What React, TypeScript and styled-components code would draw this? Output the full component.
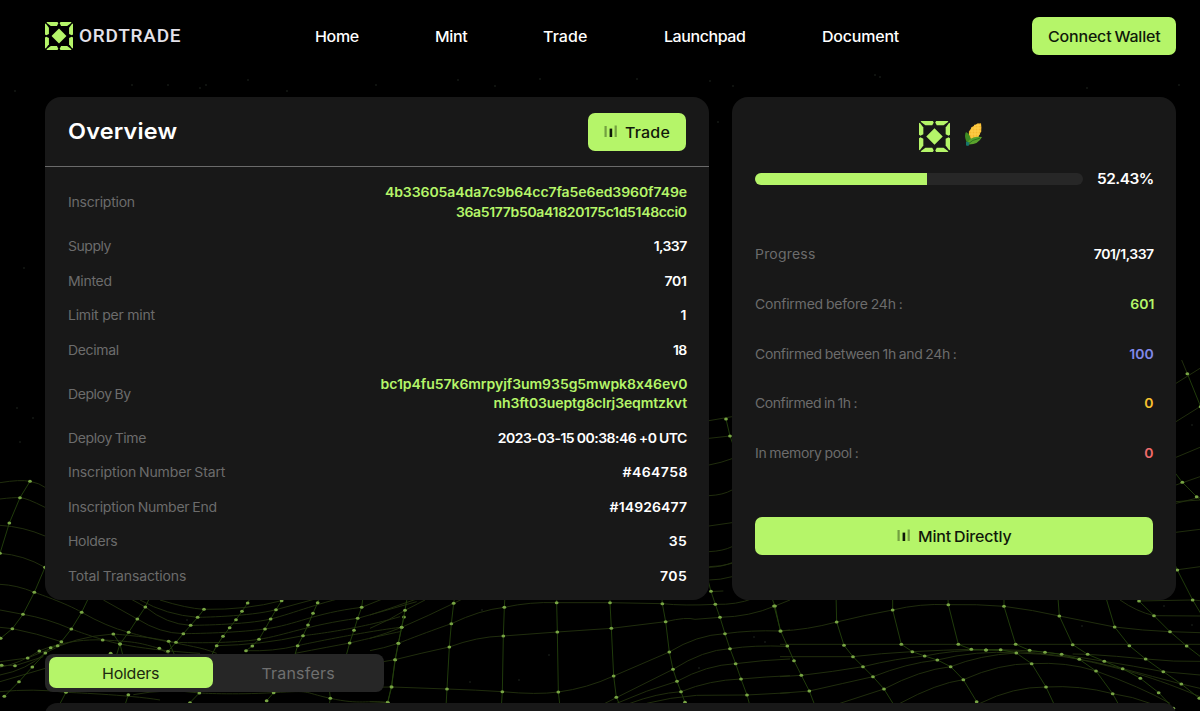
import React from "react";
import styled, { createGlobalStyle } from "styled-components";

const LIME = "#b5f569";
const WIDEN = 1.075;

const GlobalStyle = createGlobalStyle`
  *, *::before, *::after { box-sizing: border-box; }
  html, body { margin: 0; background: #000; }
  body {
    font-family: Inter, "Liberation Sans", sans-serif;
    height: 711px;
    overflow: hidden;
  }
`;

const Page = styled.div`
  position: relative;
  width: 1200px;
  height: 711px;
  overflow: hidden;
  background: #000;
`;

const Backdrop = styled.svg`
  position: absolute;
  inset: 0;
`;

const Content = styled.div`
  position: relative;
  display: flex;
  flex-direction: column;
  padding: 0 24px 0 45px;
`;

const Header = styled.header`
  display: flex;
  align-items: center;
  height: 55px;
  padding-top: 17px;
`;

const Brand = styled.div`
  display: flex;
  align-items: center;
  gap: 6px;
  width: 270px;
`;

const BrandName = styled.span`
  font: 500 19px/24px Roboto, sans-serif;
  letter-spacing: 0.75px;
  color: #e4e2ea;
`;

const Nav = styled.nav`
  display: grid;
  grid-template-columns: 120px 108px 121px 157.5px auto;
  flex: 1;
`;

/* Inter drawn a little shorter and wider, for an extended-grotesque look. */
const Text = styled.span<{ $track?: number; $word?: number; $origin?: string; $shift?: number }>`
  display: inline-block;
  font-size: ${1 / WIDEN}em;
  letter-spacing: ${(p) => (p.$track ?? 0) / WIDEN}px;
  word-spacing: ${(p) => (p.$word ?? 0) / WIDEN}px;
  margin-right: ${(p) => -(p.$track ?? 0) / WIDEN}px;
  white-space: nowrap;
  transform: translateY(${(p) => p.$shift ?? 0.5}px) scaleX(${WIDEN});
  transform-origin: ${(p) => p.$origin ?? "left"} center;
`;

const NavLink = styled.a`
  display: flex;
  font-size: 16px;
  line-height: 20px;
  font-weight: 500;
  color: #fff;
`;

const Button = styled.button<{ $width: string; $end?: number }>`
  display: flex;
  align-items: center;
  justify-content: center;
  gap: 7px;
  width: ${(p) => p.$width};
  height: 38px;
  padding: 0 ${(p) => p.$end ?? 0}px 0 0;
  border: 0;
  border-radius: 7px;
  background: ${LIME};
  color: #10180a;
  font: 500 16px/20px Inter, sans-serif;
`;

const Panels = styled.main`
  display: grid;
  grid-template-columns: 664px 444px;
  gap: 23px;
  height: 503px;
  margin-top: 42px;
`;

const Card = styled.section`
  border-radius: 16px;
  background: #181818;
`;

const CardHeader = styled.div`
  display: flex;
  align-items: center;
  justify-content: space-between;
  height: 70px;
  padding: 0 23px;
  border-bottom: 1px solid #6a6a6a;
`;

const Title = styled.h1`
  margin: 0;
  font-size: 23.4px;
  line-height: 28px;
  font-weight: 600;
  color: #fff;
`;

const Details = styled.div`
  display: flex;
  flex-direction: column;
  gap: 15.3px;
  padding: 15.3px 22px 0 23px;
`;

const DetailRow = styled.div`
  display: flex;
  align-items: center;
  justify-content: space-between;
  font-size: 14px;
  line-height: 19.2px;
`;

const Label = styled.div`
  display: flex;
  color: #6c6c6c;
`;

const Value = styled.div<{ $color?: string }>`
  display: flex;
  flex-direction: column;
  align-items: flex-end;
  font-weight: 600;
  color: ${(p) => p.$color ?? "#fff"};
`;

const MintCard = styled(Card)`
  display: flex;
  flex-direction: column;
  padding: 24px 22px 0 23px;
`;

const TokenIcons = styled.div`
  display: flex;
  justify-content: center;
  gap: 14px;
  height: 32px;
  padding-right: 6px;
`;

const ProgressLine = styled.div`
  display: flex;
  align-items: center;
  justify-content: space-between;
  height: 20px;
  margin-top: 16px;
  color: #fff;
  font-size: 15.4px;
  font-weight: 600;
`;

const Track = styled.div`
  width: 328px;
  height: 12px;
  border-radius: 6px;
  overflow: hidden;
  background: #272727;
`;

const Fill = styled.div`
  width: 52.43%;
  height: 100%;
  background: ${LIME};
`;

const Stats = styled.div`
  display: flex;
  flex-direction: column;
  gap: 30.6px;
  margin: 55px 0 54.4px;
`;

const Tabs = styled.div`
  display: flex;
  width: 339px;
  height: 38px;
  margin-top: 54px;
  padding: 3px 4px 4px;
  border-radius: 8px;
  background: #262626;
`;

const Tab = styled.div<{ $active?: boolean }>`
  display: flex;
  align-items: center;
  justify-content: center;
  flex: 0 0 ${(p) => (p.$active ? 164 : 171)}px;
  height: 31px;
  border-radius: 7px;
  font-size: 16px;
  background: ${(p) => (p.$active ? LIME : "transparent")};
  color: ${(p) => (p.$active ? "#1d2b10" : "#6f6f6f")};
`;

const TableCard = styled.section`
  height: 20px;
  margin-top: 11px;
  border-radius: 12px 12px 0 0;
  background: #181818;
`;

const LogoMark = ({ size }: { size: number }) => (
  <svg width={size} height={size} viewBox="0 0 30 30" fill={LIME}>
    {[0, 90, 180, 270].map((a) => (
      <g key={a} transform={`rotate(${a} 15 15)`}>
        <path d="M2.2 0H13.4L14.3 1.4 12.8 4.2H6.2L1.6 .8Z" />
        <path d="M0 2.2V13.4L1.4 14.3 4.2 12.8V6.2L.8 1.6Z" />
      </g>
    ))}
    <path d="M15 7 23 15 15 23 7 15Z" />
  </svg>
);

const Bars = () => (
  <svg width="14" height="13" viewBox="0 0 14 13">
    <rect x="0.5" y="1" width="2.2" height="11" fill="#73a040" />
    <rect x="5.6" y="3.6" width="2.6" height="8.4" fill="#10180a" />
    <rect x="10.6" y="0.5" width="2.2" height="11.5" fill="#73a040" />
  </svg>
);

const Corn = () => (
  <svg width="20" height="26" viewBox="0 -1.5 20 26">
    <path d="M13 1.2 17 .8 17.4 5 17.2 9 14.5 14 9 18 4.5 15 5 9 8 4.5Z" fill="#f6b92e" />
    <path d="M14 1v14M11 3v14M8 6v11M6 8.5H17M7 5.5H17M5 11.5H16M10 2.8H17" stroke="#ffcf4a" strokeWidth="1" fill="none" />
    <path d="M2 9.5Q0 13 2 18L4 22.5 7 20Q7 12 2 9.5Z" fill="#3d8b22" />
    <path d="M3 22Q5 13 18 14.5 14 22.5 4 22Z" fill="#5aa32c" />
    <path d="M3.5 22Q8 17 16 15.6" stroke="#2f7820" fill="none" />
    <path d="M2 19 5.5 20 4.5 23.6 2 23Z" fill="#16756a" />
  </svg>
);

type Patch = { x: number; y: number; columns: number[][]; dots?: number[]; rows: string };

/* Mesh patches: columns are x,y pairs of nodes, three units to a pixel. */
const PATCHES: Patch[] = [
  {
    x: 0,
    y: 380,
    columns: [
      [90, 304, 60, 353, 28, 429, 0, 520],
      [135, 562, 103, 637, 69, 703, 37, 746, 2, 775],
      [270, 645, 245, 697, 214, 747, 184, 785, 173, 797, 152, 803, 136, 819, 97, 861, 57, 905, 13, 949],
      [455, 640, 436, 681, 412, 717, 386, 757, 360, 792, 345, 840],
      [612, 688, 593, 712, 572, 736, 550, 761, 528, 787, 504, 814],
      [755, 645, 743, 669, 726, 694, 708, 719, 689, 743, 669, 769, 650, 797, 630, 835],
      [845, 662, 828, 689, 812, 717, 795, 747, 777, 778, 757, 798, 738, 812],
      [960, 645, 953, 668, 939, 700, 924, 735, 909, 767, 893, 797, 880, 840],
      [1090, 645, 1085, 682, 1073, 715, 1062, 751, 1049, 789, 1035, 840],
      [1212, 711, 1205, 742, 1195, 790, 1186, 839, 1174, 920, 1163, 967],
      [340, 762, 360, 792, 372, 840],
      [506, 784, 530, 840],
      [198, 937, 170, 990],
      [385, 944, 370, 990],
      [598, 939, 570, 968],
      [821, 938, 800, 962],
      [985, 900, 991, 955, 985, 990],
    ],
    dots: [83, 834, 118, 813, 45, 857, 5, 856, 308, 780, 478, 805, 332, 820],
    rows: `M0 308Q60 298 90 304T135 322M0 357Q40 352 60 353T135 382M0 436Q70 440 135 468M0 520Q70 525 135 562
      M480 660Q560 685 612 688Q740 690 845 662M420 660Q500 705 593 712S750 710 828 689L953 655
      M380 650 436 681Q500 733 572 736S740 735 812 717 953 668 1085 640
      M310 660 412 717Q480 760 550 761S700 760 795 747 939 700 1085 682L1165 650
      M245 697Q320 740 386 757S480 785 528 787 700 790 777 778 924 735 1073 715L1250 665
      M0 613Q50 615 103 637S200 670 245 697M0 690 69 703Q140 715 214 747S300 780 360 792 504 814 600 820
      M0 742 37 746Q110 760 184 785M0 862Q60 850 118 813S200 775 308 780 420 790 478 805L520 830
      M0 885Q80 870 136 819 220 770 340 762S450 770 506 784 600 800 650 820
      M0 856 45 857 130 830M0 845 83 834 190 790M0 905 136 865M650 797Q780 795 909 767S1062 751 1200 710
      M738 812Q820 815 893 797S1062 760 1200 742M885 820Q990 800 1049 789S1150 765 1200 755
      M0 935Q100 925 198 937S385 944 480 960M400 944Q500 925 598 939S700 945 821 938 900 935 991 955 1100 960 1163 967`,
  },
  {
    x: 370,
    y: 560,
    columns: [
      [113, 105, 105, 151, 95, 202, 85, 250, 75, 299, 65, 381, 53, 428],
      [255, 105, 251, 130, 244, 191, 238, 261, 231, 387, 228, 440],
      [405, 105, 403, 142, 400, 228, 397, 395, 394, 440],
      [560, 105, 560, 128, 562, 216, 565, 396, 570, 440],
      [720, 105, 720, 128, 724, 205, 731, 348, 739, 412, 752, 440],
      [875, 105, 877, 131, 887, 185, 898, 276, 909, 328, 921, 364, 933, 395, 945, 427],
      [1010, 45, 1023, 94, 1036, 133, 1050, 172, 1065, 221, 1080, 266, 1097, 311, 1113, 357, 1131, 405, 1142, 445],
      [1200, 100, 1215, 138, 1231, 213],
    ],
    rows: `M0 165 60 145 160 110M0 205Q60 180 105 151L165 120M0 235Q50 220 95 202 180 165 251 130L275 118
      M0 272Q40 265 85 250S160 220 244 191Q330 150 403 142 480 125 560 128H720L877 131Q940 138 1036 133 1100 135 1150 115
      M40 305 75 299Q150 280 238 261 320 230 400 228L562 216 724 205 887 185Q950 170 975 178L1050 172Q1140 170 1215 138L1260 120
      M0 382 65 381 231 387Q320 390 397 395 500 405 565 396 650 385 731 348L898 276Q980 225 1065 221 1140 210 1231 213L1260 210
      M705 430 909 328Q1000 270 1080 266 1150 255 1251 259M740 430Q830 390 921 364 1010 315 1097 311 1180 300 1260 297
      M780 430Q860 400 933 395 1020 360 1113 357 1190 350 1260 347M830 430Q900 412 980 406L1131 405 1260 398M0 425 53 428
      M1018 95 1060 93M1018 60Q1050 60 1086 50M1018 20Q1050 20 1086 10`,
  },
  {
    x: 780,
    y: 500,
    columns: [
      [-18, 318, 2, 393, 22, 438, 42, 482, 64, 526, 88, 573, 108, 625],
      [168, 280, 170, 366, 192, 436, 219, 470, 249, 500, 279, 530, 312, 567, 348, 625],
      [338, 280, 338, 330, 364, 433, 397, 455, 434, 468, 472, 480, 512, 500, 550, 539, 590, 605],
      [503, 280, 505, 314, 535, 433, 574, 448, 618, 450],
      [672, 280, 672, 319, 707, 433, 749, 451, 795, 457, 845, 463, 898, 478, 948, 513, 998, 581, 1022, 625],
      [618, 450, 662, 449, 709, 459, 755, 491, 798, 561, 828, 625],
      [833, 280, 838, 348, 878, 434, 923, 463, 973, 484, 1028, 506, 1081, 535, 1136, 578, 1180, 625],
      [974, 280, 1004, 381, 1048, 437, 1097, 477, 1150, 515, 1204, 552, 1258, 595],
      [1077, 303, 1122, 347, 1170, 395, 1220, 438, 1268, 475],
      [1175, 170, 1192, 210, 1238, 300, 1268, 350],
    ],
    rows: `M0 393Q80 390 170 366 255 345 338 330 420 310 505 314 590 312 672 319 760 330 838 348L1004 381Q1090 392 1170 395L1260 398
      M0 433H1260M0 470H219Q300 460 397 455T574 448L662 449Q780 452 845 463T973 484
      M0 530 64 526Q160 515 249 500 350 475 434 468 520 450 618 450S800 455 898 478 1081 515 1260 590
      M0 580 88 573Q190 550 279 530 380 490 472 480 590 450 709 459 850 460 1028 506
      M180 610 312 567Q420 510 512 500 600 465 709 459M360 610Q470 550 550 539 660 490 755 491 860 485 948 513 1080 560 1170 610
      M600 610Q700 560 798 561 900 555 998 581 1060 590 1110 610M878 462 923 463Q1010 468 1097 477T1260 484
      M973 484Q1060 498 1150 515L1260 525M1028 506Q1120 530 1204 552L1260 565M1020 300Q1070 335 1122 347L1260 348
      M1077 303 1238 300 1260 302M1187 210 1260 200M1187 97 1260 88M1187 5 1260 0`,
  },
  {
    x: 1080,
    y: 360,
    columns: [
      [322, 41, 362, 140],
      [275, 325, 307, 367, 350, 410, 372, 430],
    ],
    rows: "M305 0 322 41M288 70 360 25M288 185 360 140M288 292 360 262M288 375 360 350M288 430 360 412",
  },
  {
    x: 690,
    y: 370,
    columns: [[108, 147, 120, 198, 135, 240]],
    rows: `M57 152 126 140M57 205 120 198M57 285Q95 278 126 266M57 377Q100 375 126 360M57 468 126 458
      M57 545Q100 543 126 530M57 592Q100 590 126 578`,
  },
];

const SPECKS = [
  132, 85, 168, 85, 200, 88, 206, 85, 248, 80, 287, 91, 376, 85, 458, 80, 495, 86, 540, 79, 637, 79, 710, 81, 733, 86, 875, 75, 880, 77, 1087, 88, 1179, 85, 15, 91,
  17, 408, 33, 418, 20, 442, 482, 610, 549, 655, 470, 682, 519, 680, 754, 637, 765, 642, 699, 668, 187, 620, 1082, 626, 1164, 606, 1192, 625, 718, 122, 1192, 425, 24, 268,
];

const Mesh = () => (
  <Backdrop width="1200" height="711" viewBox="0 0 1200 711">
    {PATCHES.map((p, i) => (
      <g key={i} transform={`translate(${p.x} ${p.y}) scale(.33333)`}>
        <path d={p.rows} fill="none" stroke="#22300e" strokeWidth="2.8" />
        {p.columns.map((c, j) => (
          <polyline key={j} points={c.join(" ")} fill="none" stroke="#223f0c" strokeWidth="2.8" />
        ))}
        {[...p.columns, p.dots ?? []].map((c, j) =>
          c.map((v, k) =>
            k % 2 ? null : <ellipse key={`${j}-${k}`} cx={v} cy={c[k + 1]} rx="5.6" ry="4.6" fill="#78a544" />
          )
        )}
      </g>
    ))}
    {SPECKS.map((v, k) => (k % 2 ? null : <circle key={k} cx={v} cy={SPECKS[k + 1]} r="1" fill="#151814" />))}
  </Backdrop>
);

type Line = { text: string; track?: number; word?: number };
type Item = { label: Line; values: Line[]; color?: string };

const DETAILS: Item[] = [
  {
    label: { text: "Inscription", track: -0.24 },
    values: [
      { text: "4b33605a4da7c9b64cc7fa5e6ed3960f749e", track: -0.06 },
      { text: "36a5177b50a41820175c1d5148cci0", track: -0.33 },
    ],
    color: LIME,
  },
  { label: { text: "Supply", track: -0.45 }, values: [{ text: "1,337", track: -0.6 }] },
  { label: { text: "Minted", track: -0.3 }, values: [{ text: "701", track: -0.2 }] },
  { label: { text: "Limit per mint", track: -0.22 }, values: [{ text: "1" }] },
  { label: { text: "Decimal", track: -0.35 }, values: [{ text: "18", track: -0.6 }] },
  {
    label: { text: "Deploy By", track: -0.4, word: -0.8 },
    values: [
      { text: "bc1p4fu57k6mrpyjf3um935g5mwpk8x46ev0", track: -0.04 },
      { text: "nh3ft03ueptg8clrj3eqmtzkvt", track: -0.1 },
    ],
    color: LIME,
  },
  {
    label: { text: "Deploy Time", track: -0.38, word: -0.8 },
    values: [{ text: "2023-03-15 00:38:46 +0 UTC", track: -0.51, word: -0.4 }],
  },
  { label: { text: "Inscription Number Start", track: -0.13, word: -0.8 }, values: [{ text: "#464758", track: 0.45 }] },
  { label: { text: "Inscription Number End", track: -0.24, word: -0.8 }, values: [{ text: "#14926477", track: 0.1 }] },
  { label: { text: "Holders", track: -0.3 }, values: [{ text: "35", track: 0.3 }] },
  { label: { text: "Total Transactions", track: -0.13, word: -0.5 }, values: [{ text: "705", track: 0.4 }] },
];

const STATS: Item[] = [
  { label: { text: "Progress", track: 0.2 }, values: [{ text: "701/1,337", track: -0.48 }] },
  { label: { text: "Confirmed before 24h :", track: -0.22, word: -0.7 }, values: [{ text: "601" }], color: LIME },
  { label: { text: "Confirmed between 1h and 24h :", track: -0.34, word: -0.7 }, values: [{ text: "100" }], color: "#8088ea" },
  { label: { text: "Confirmed in 1h :", track: -0.42, word: -0.7 }, values: [{ text: "0" }], color: "#f7c02f" },
  { label: { text: "In memory pool :", track: -0.34, word: -0.7 }, values: [{ text: "0" }], color: "#ee6b6b" },
];

const Run = ({ line, origin }: { line: Line; origin?: string }) => (
  <Text $track={line.track} $word={line.word} $origin={origin}>
    {line.text}
  </Text>
);

const Entry = ({ item }: { item: Item }) => (
  <DetailRow>
    <Label>
      <Run line={item.label} />
    </Label>
    <Value $color={item.color}>
      {item.values.map((v) => (
        <Run key={v.text} line={v} origin="right" />
      ))}
    </Value>
  </DetailRow>
);

const NAV: Line[] = [
  { text: "Home", track: -0.3 },
  { text: "Mint", track: -0.3 },
  { text: "Trade", track: 0.1 },
  { text: "Launchpad", track: -0.42 },
  { text: "Document", track: -0.2 },
];

export default function App() {
  return (
    <Page>
      <GlobalStyle />
      <Mesh />
      <Content>
        <Header>
          <Brand>
            <LogoMark size={28} />
            <BrandName>ORDTRADE</BrandName>
          </Brand>
          <Nav>
            {NAV.map((n) => (
              <NavLink key={n.text}>
                <Run line={n} />
              </NavLink>
            ))}
          </Nav>
          <Button $width="144px">
            <Text $track={-0.2} $word={-1} $origin="center">
              Connect Wallet
            </Text>
          </Button>
        </Header>
        <Panels>
          <Card>
            <CardHeader>
              <Title>
                <Text $track={0.2} $shift={-0.6}>
                  Overview
                </Text>
              </Title>
              <Button $width="98px" $end={3}>
                <Bars />
                <Text $track={0.2}>Trade</Text>
              </Button>
            </CardHeader>
            <Details>
              {DETAILS.map((d) => (
                <Entry key={d.label.text} item={d} />
              ))}
            </Details>
          </Card>
          <MintCard>
            <TokenIcons>
              <LogoMark size={31} />
              <Corn />
            </TokenIcons>
            <ProgressLine>
              <Track>
                <Fill />
              </Track>
              <Text $track={-0.5} $origin="right" $shift={-0.6}>
                52.43%
              </Text>
            </ProgressLine>
            <Stats>
              {STATS.map((s) => (
                <Entry key={s.label.text} item={s} />
              ))}
            </Stats>
            <Button $width="398px" $end={5}>
              <Bars />
              <Text $track={-0.15} $word={-1.2}>
                Mint Directly
              </Text>
            </Button>
          </MintCard>
        </Panels>
        <Tabs>
          <Tab $active>
            <Text $track={-0.25} $origin="center">
              Holders
            </Text>
          </Tab>
          <Tab>
            <Text $track={0.2} $origin="center">
              Transfers
            </Text>
          </Tab>
        </Tabs>
        <TableCard />
      </Content>
    </Page>
  );
}
